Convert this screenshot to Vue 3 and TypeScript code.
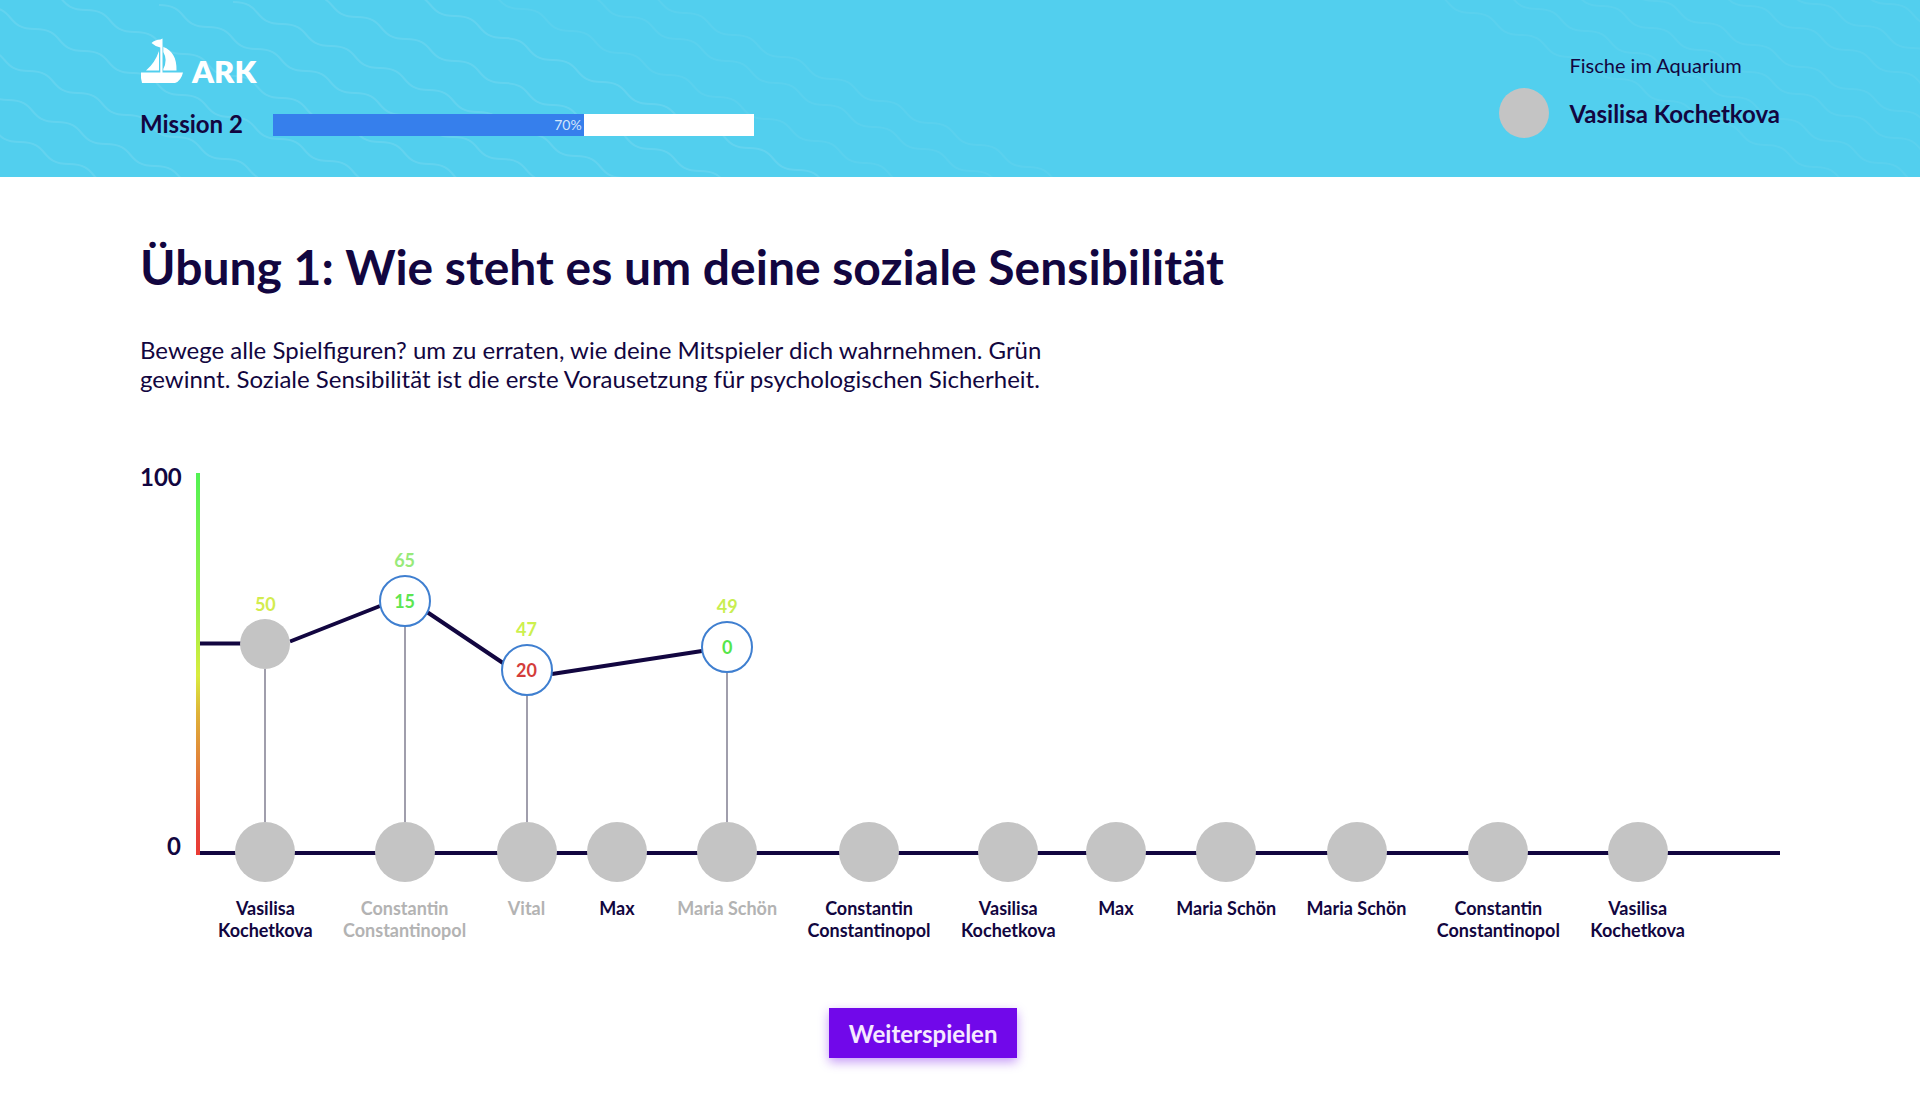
<script setup lang="ts">
interface Guess {
  score: number
  scoreColor: string
  stem: number
  diff?: number
  diffColor?: string
}

interface Player {
  name: string[]
  muted?: boolean
  guess?: Guess
}

interface Wave {
  x: number
  y: number
  faint?: boolean
}

const progress = { label: '70%', fill: 64.6 }

const players: Player[] = [
  { name: ['Vasilisa', 'Kochetkova'], guess: { score: 50, scoreColor: '#d3ec4e', stem: 153 } },
  {
    name: ['Constantin', 'Constantinopol'],
    muted: true,
    guess: { score: 65, scoreColor: '#98ea7a', stem: 195, diff: 15, diffColor: '#5ce650' },
  },
  {
    name: ['Vital'],
    muted: true,
    guess: { score: 47, scoreColor: '#cdf04e', stem: 126, diff: 20, diffColor: '#d43d3a' },
  },
  { name: ['Max'] },
  {
    name: ['Maria Schön'],
    muted: true,
    guess: { score: 49, scoreColor: '#c8ee50', stem: 149, diff: 0, diffColor: '#55e64a' },
  },
  { name: ['Constantin', 'Constantinopol'] },
  { name: ['Vasilisa', 'Kochetkova'] },
  { name: ['Max'] },
  { name: ['Maria Schön'] },
  { name: ['Maria Schön'] },
  { name: ['Constantin', 'Constantinopol'] },
  { name: ['Vasilisa', 'Kochetkova'] },
]

// Each wave descends in equal steps; x/y is the crest it starts from.
const leftWaves: Wave[] = [
  { x: -29, y: 120 },
  { x: -41, y: 78 },
  { x: -20, y: 49 },
  { x: -14, y: 7 },
  { x: 37, y: -12 },
  { x: 159, y: 5 },
  { x: 233, y: 2 },
  { x: 308, y: -5 },
  { x: 406, y: -6 },
  { x: 473, y: -13, faint: true },
  { x: 580, y: -5, faint: true },
  { x: 636, y: -9, faint: true },
]

const rightWaves: Wave[] = [
  { x: 23, y: -9, faint: true },
  { x: 88, y: -13, faint: true },
  { x: 153, y: -16, faint: true },
  { x: 206, y: -21, faint: true },
  { x: 300, y: -16, faint: true },
  { x: 366, y: -18, faint: true },
  { x: 440, y: -18, faint: true },
]

const step = ' c 30 0 19 22 49 22'
const wavePath = (wave: Wave): string => `M ${wave.x} ${wave.y}` + step.repeat(9)
</script>

<template>
  <div class="page">
    <header class="header">
      <svg class="waves waves-left" width="1060" height="177" aria-hidden="true">
        <path v-for="(w, i) in leftWaves" :key="i" :d="wavePath(w)" :class="{ faint: w.faint }" />
      </svg>
      <svg class="waves waves-right" width="520" height="177" aria-hidden="true">
        <path v-for="(w, i) in rightWaves" :key="i" :d="wavePath(w)" :class="{ faint: w.faint }" />
      </svg>

      <div class="status">
        <div class="brand">
          <svg class="boat" width="43" height="46" viewBox="0 0 43 46" aria-hidden="true">
            <path d="M11.500 5 Q15 1.500 20.500 1.500 L22.500 0.500 V35 H20.300 V9.500 Q16 9 11.500 5 Z" />
            <path d="M19 13 V32.500 H6 Q15 25 19 13 Z" />
            <path d="M23.300 9 C32 12 37 20 36.500 32.500 H23.300 V31 Q28 22 23.300 14 Z" />
            <path d="M1 34.500 H43 Q41 43 35 45 H2 Q0.500 41 1 34.500 Z" />
          </svg>
          <span class="brand-name">ARK</span>
        </div>
        <div class="mission">
          <span class="mission-name">Mission 2</span>
          <div class="progress" role="progressbar" aria-label="Mission 2" aria-valuenow="70">
            <div class="progress-fill" :style="{ width: progress.fill + '%' }">{{ progress.label }}</div>
          </div>
        </div>
      </div>

      <div class="user">
        <div class="user-avatar"></div>
        <div class="user-text">
          <span class="team">Fische im Aquarium</span>
          <span class="user-name">Vasilisa Kochetkova</span>
        </div>
      </div>
    </header>

    <main class="main">
      <h1 class="title">Übung 1: Wie steht es um deine soziale Sensibilität</h1>
      <p class="intro">
        Bewege alle Spielfiguren? um zu erraten, wie deine Mitspieler dich wahrnehmen. Grün gewinnt.
        Soziale Sensibilität ist die erste Vorausetzung für psychologischen Sicherheit.
      </p>

      <section class="chart">
        <div class="scale">
          <span>100</span>
          <span>0</span>
        </div>
        <div class="plot">
          <div class="axis-y"></div>
          <div class="axis-x"></div>
          <svg class="links" width="560" height="382" aria-hidden="true">
            <path d="M4 170.500 H46 M94 168.500 L184 133 M231 139 L307 190 M356 201 L506 178" />
          </svg>
          <ul class="players">
            <li v-for="(p, i) in players" :key="i" class="player">
              <div class="pin">
                <template v-if="p.guess">
                  <span class="score" :style="{ color: p.guess.scoreColor }">{{ p.guess.score }}</span>
                  <span
                    v-if="p.guess.diff !== undefined"
                    class="marker"
                    :style="{ color: p.guess.diffColor }"
                  >{{ p.guess.diff }}</span>
                  <span v-else class="marker marker-own"></span>
                  <span class="stem" :style="{ height: p.guess.stem + 'px' }"></span>
                </template>
              </div>
              <div class="avatar"></div>
              <div class="name" :class="{ muted: p.muted }">
                <span v-for="part in p.name" :key="part">{{ part }}</span>
              </div>
            </li>
          </ul>
        </div>
      </section>

      <button type="button" class="next">Weiterspielen</button>
    </main>
  </div>
</template>

<style>
body {
  margin: 0;
  background: #fff;
}
</style>

<style scoped>
.page {
  font-family: Lato, 'Liberation Sans', sans-serif;
  font-size: 24px;
  line-height: 29px;
  color: #120640;
}

.header {
  position: relative;
  display: flex;
  justify-content: space-between;
  box-sizing: border-box;
  min-height: 177px;
  padding: 38px 140px 36px;
  background: #52cfee;
  overflow: hidden;
}

.waves {
  position: absolute;
  top: 0;
  fill: none;
  stroke: rgba(255, 255, 255, 0.1);
  stroke-width: 2;
}

.waves .faint {
  stroke: rgba(255, 255, 255, 0.05);
}

.waves-left {
  left: 0;
}

.waves-right {
  right: 0;
}

.status,
.user {
  position: relative;
}

.brand {
  display: flex;
  align-items: flex-end;
  gap: 9px;
  height: 46px;
}

.boat {
  fill: #fff;
}

.brand-name {
  font-size: 31px;
  line-height: 26px;
  font-weight: 800;
  color: #fff;
}

.mission {
  display: flex;
  align-items: center;
  gap: 30px;
  margin-top: 26px;
}

.mission-name {
  padding-bottom: 2px;
  line-height: 27px;
}

.mission-name,
.user-name {
  font-weight: 700;
}

.progress {
  width: 481px;
  height: 22px;
  background: #fff;
}

.progress-fill {
  box-sizing: border-box;
  height: 100%;
  padding-right: 2px;
  background: #367fec;
  font-size: 14px;
  line-height: 22px;
  text-align: right;
  color: #d3e6fb;
}

.user {
  display: flex;
  align-items: flex-end;
  gap: 20px;
  height: 100px;
}

.user-avatar {
  width: 50px;
  height: 50px;
  border-radius: 50%;
  background: #c4c4c4;
}

.user-text {
  display: flex;
  flex-direction: column;
  gap: 19px;
  margin-bottom: 10px;
}

.team {
  font-size: 20px;
}

.main {
  padding: 61px 140px 40px;
}

.title {
  margin: 0;
  font-size: 48px;
  line-height: 58px;
  font-weight: 700;
}

.intro {
  max-width: 920px;
  margin: 39px 0 0;
}

.chart {
  display: flex;
  gap: 15px;
  margin-top: 69px;
}

.scale {
  display: flex;
  flex-direction: column;
  justify-content: space-between;
  width: 41px;
  height: 398px;
  text-align: right;
  font-weight: 700;
}

.plot {
  position: relative;
  flex: 1;
  margin-top: 11px;
}

.axis-y {
  position: absolute;
  top: 0;
  left: 0;
  width: 4px;
  height: 382px;
  background: linear-gradient(#52f253, #98f146 35%, #d9ec3e 53%, #dfb238 63%, #e5453a 92%, #ea3a34);
}

.axis-x {
  position: absolute;
  top: 378px;
  left: 4px;
  right: 0;
  height: 4px;
  background: #120640;
}

.links {
  position: absolute;
  top: 0;
  left: 0;
  fill: none;
  stroke: #120640;
  stroke-width: 4;
}

.players {
  position: relative;
  display: flex;
  justify-content: space-between;
  max-width: 1467px;
  margin: 0;
  padding: 0 0 0 22px;
  list-style: none;
}

.player {
  display: flex;
  flex-direction: column;
  align-items: center;
}

.pin {
  display: flex;
  flex-direction: column;
  align-items: center;
  justify-content: flex-end;
  height: 349px;
  font-size: 18px;
  font-weight: 700;
}

.score {
  line-height: 30px;
}

.marker {
  box-sizing: border-box;
  width: 52px;
  height: 52px;
  border: 2px solid #3f7fd0;
  border-radius: 50%;
  background: #fff;
  line-height: 48px;
  text-align: center;
}

.marker-own {
  width: 50px;
  height: 50px;
  border: 0;
  background: #c4c4c4;
}

.stem {
  width: 2px;
  background: #a09eac;
}

.avatar {
  width: 60px;
  height: 60px;
  border-radius: 50%;
  background: #c4c4c4;
}

.name {
  display: flex;
  flex-direction: column;
  align-items: center;
  min-height: 44px;
  margin-top: 15px;
  font-size: 18px;
  line-height: 22px;
  font-weight: 700;
  white-space: nowrap;
}

.muted {
  color: #b3b3b3;
}

.next {
  display: block;
  height: 50px;
  margin: 67px 0 0 42%;
  padding: 0 20px;
  border: 0;
  background: #7108ea;
  box-shadow: 0 4px 10px rgba(113, 8, 234, 0.4);
  font: 700 24px/29px Lato, 'Liberation Sans', sans-serif;
  color: #f6e9ff;
  cursor: pointer;
}
</style>
